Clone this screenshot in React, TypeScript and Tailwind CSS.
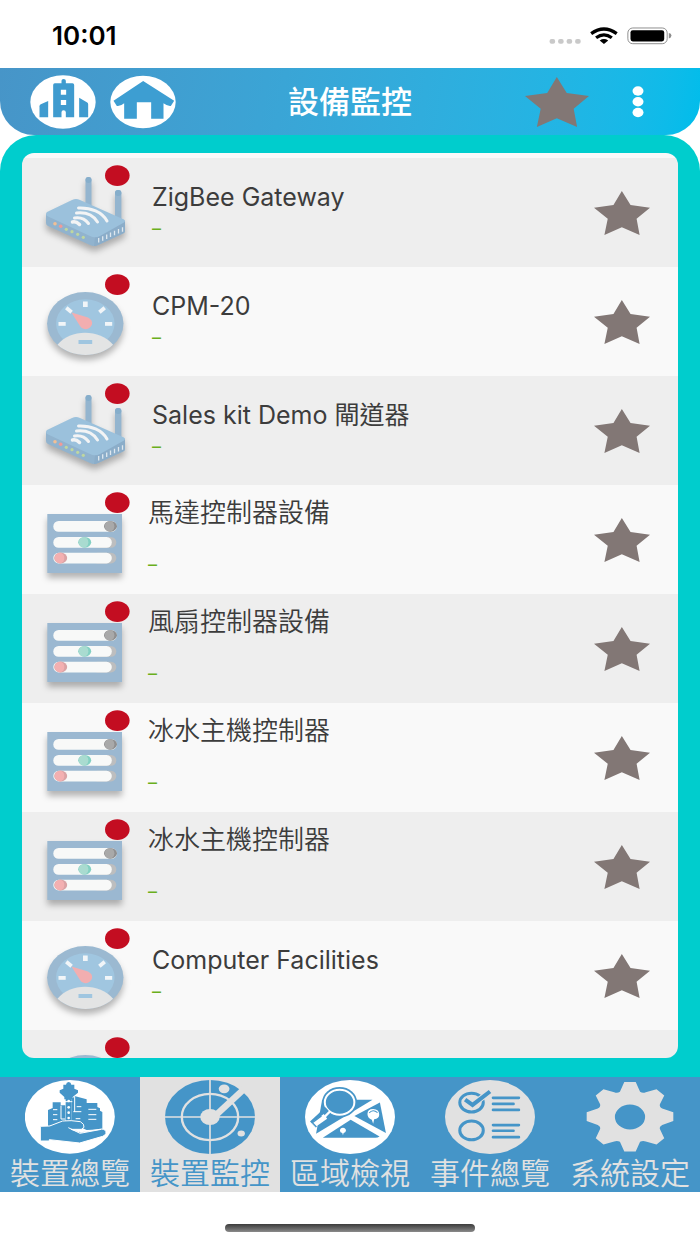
import { useState } from 'react';
import clsx from 'clsx';

type DeviceKind = 'router' | 'gauge' | 'controller';

type Device = {
  id: number;
  name?: string;
  kind: DeviceKind;
};

const devices: Device[] = [
  { id: 1, name: 'ZigBee Gateway', kind: 'router' },
  { id: 2, name: 'CPM-20', kind: 'gauge' },
  { id: 3, name: 'Sales kit Demo 閘道器', kind: 'router' },
  { id: 4, name: '馬達控制器設備', kind: 'controller' },
  { id: 5, name: '風扇控制器設備', kind: 'controller' },
  { id: 6, name: '冰水主機控制器', kind: 'controller' },
  { id: 7, name: '冰水主機控制器', kind: 'controller' },
  { id: 8, name: 'Computer Facilities', kind: 'gauge' },
  { id: 9, kind: 'gauge' },
];

const Star = ({ className }: { className?: string }) => (
  <svg viewBox="0 0 167 131" className={className} fill="#827775" aria-hidden="true">
    <polygon points="83,0 109,42 167,50 127,83 136,131 83,108 31,131 41,83 0,50 58,42" />
  </svg>
);

const RouterArt = () => (
  <g>
    <rect x="63.5" y="19" width="6" height="36" rx="3" fill="#94b5cf" />
    <rect x="63.5" y="19" width="6" height="6" rx="3" fill="#86aecb" />
    <rect x="93" y="32" width="6.4" height="34" rx="3" fill="#94b5cf" />
    <rect x="93" y="32" width="6.4" height="6" rx="3" fill="#86aecb" />
    <path d="M24 56 L24 65 Q24 67 26 68 L68 87 Q72 89 76 87 L101 75.5 Q103 74.5 103 73 L103 63 Z" fill="#91b3ce" />
    <path d="M73 79 L103 63.5 L103 73 Q103 74.5 101 75.5 L76 87 Q74 88 72 88 Z" fill="#8badc9" />
    <path d="M25 54 L50 42 Q54 40 58 42 L102 61.5 Q104 63 102 64.5 L78 78 Q73 80.5 68 78 L25 58 Q23 56 25 54 Z" fill="#9bc1dc" />
    <g fill="none" stroke="#f3f4f5" strokeWidth="3" strokeLinecap="round">
      <path d="M56.5 50 C69 49.5 80 54 85 63" />
      <path d="M54.5 55 C64 54 71.5 57.5 75.5 64" />
      <path d="M52.5 60 C58.5 59 63.5 61.5 66.5 65.5" />
      <path d="M50.5 64 C53.5 63.2 55.5 64.5 57.5 66.5" strokeWidth="3.5" />
    </g>
    <circle cx="33" cy="65.7" r="1.8" fill="#f2bf95" />
    <circle cx="38.7" cy="68.3" r="1.8" fill="#f09a98" />
    <circle cx="44.3" cy="71.3" r="1.6" fill="#bfd7a0" />
    <circle cx="50" cy="73.7" r="1.6" fill="#bfd7a0" />
    <circle cx="55.7" cy="76.3" r="1.6" fill="#bfd7a0" />
    <circle cx="61.3" cy="79.3" r="1.6" fill="#bfd7a0" />
    <path
      d="M76.7 80v4.5M80.7 78.2v4.5M84.7 76.4v4.5M88.5 74.6v4.5M92.5 72.8v4.5M96.5 71v4.5M100.5 69.2v4.5"
      stroke="#dfe8ef"
      strokeWidth="1.3"
    />
  </g>
);

const GaugeArt = () => (
  <g>
    <ellipse cx="63.3" cy="56.5" rx="38.2" ry="31.5" fill="#9bb9d1" />
    <ellipse cx="63.3" cy="56.5" rx="29.3" ry="24.2" fill="#a0c6e0" />
    <path d="M35.5 77.8 C48 61.8 78 61.8 91.1 77.8 C76 91.4 51 91.4 35.5 77.8 Z" fill="#e3e4e4" />
    <g fill="#f1f5f8">
      <rect x="61" y="34.5" width="4.7" height="5.5" />
      <rect x="36.5" y="55" width="7.2" height="3.8" />
      <rect x="83" y="55" width="7.2" height="3.8" />
      <rect x="43.5" y="41.2" width="7" height="3.8" transform="rotate(40 47 43)" />
      <rect x="76.5" y="41.2" width="7" height="3.8" transform="rotate(-40 80 43)" />
    </g>
    <path d="M49.5 45.5 L66 50.5 Q71 53 70 57.5 Q68 62 63 62.3 Q59.5 62 58 59 Z" fill="#f2aeb0" />
    <rect x="56.5" y="73" width="13.7" height="4" fill="#a0c6e0" />
  </g>
);

const ControllerArt = () => (
  <g>
    <rect x="25.3" y="29" width="74.7" height="59" fill="#9bb8d1" />
    <rect x="31.3" y="36" width="63.5" height="10.7" rx="5.3" fill="#f8f9f8" />
    <rect x="70" y="52" width="24.3" height="10.7" rx="5.3" fill="#bdbebf" />
    <rect x="31.3" y="52" width="58.5" height="10.7" rx="5.3" fill="#f8f9f8" />
    <rect x="70" y="67.7" width="24.3" height="10.7" rx="5.3" fill="#bdbebf" />
    <rect x="31.3" y="67.7" width="58.5" height="10.7" rx="5.3" fill="#f8f9f8" />
    <ellipse cx="88.5" cy="41.3" rx="6.5" ry="5.4" fill="#8f8f90" />
    <path d="M88 36 A5 5.4 0 0 1 88 46.7 A6 5.4 0 0 1 88 36Z" fill="#a9a9a9" />
    <ellipse cx="62.7" cy="57.3" rx="6.5" ry="5.4" fill="#83d0c2" />
    <path d="M62 52 A5 5.4 0 0 1 62 62.7 A6 5.4 0 0 1 62 52Z" fill="#a9dbd0" />
    <ellipse cx="38.7" cy="73" rx="6.5" ry="5.4" fill="#daa3a5" />
    <path d="M38 67.7 A5 5.4 0 0 1 38 78.4 A6 5.4 0 0 1 38 67.7Z" fill="#f3b0b1" />
  </g>
);

const DeviceIcon = ({ kind }: { kind: DeviceKind }) => (
  <svg viewBox="0 0 110 109" className="w-[110px] h-[109px] shrink-0" aria-hidden="true">
    <g className="drop-shadow-[0_5px_3px_rgba(0,0,0,0.28)]">
      {kind === 'router' && <RouterArt />}
      {kind === 'gauge' && <GaugeArt />}
      {kind === 'controller' && <ControllerArt />}
    </g>
    <ellipse cx="95.3" cy="17.6" rx="12.3" ry="10.3" fill="#c30d21" />
  </svg>
);

const DeviceInfo = ({ name }: { name: string }) => {
  // names without latin letters get the spread two line layout
  const isCjk = !/[A-Za-z]/.test(name);

  return (
    <div
      className={clsx(
        'flex flex-1 flex-col self-stretch min-w-0',
        isCjk ? 'pl-4 pt-3 gap-5' : 'pl-5 pt-[23px]'
      )}
    >
      <p className={clsx('leading-8 whitespace-nowrap text-[#3c3c3c]', isCjk ? 'text-[26px] font-[350]' : 'text-[25px]')}>
        {name}
      </p>
      <p className="text-lg leading-8 text-[#6aaf1c]">–</p>
    </div>
  );
};

const DeviceRow = ({ device }: { device: Device }) => (
  <li className="flex items-center h-[109px] shrink-0 odd:bg-[#eeeeee] even:bg-[#f9f9f9]">
    <DeviceIcon kind={device.kind} />
    {device.name ? <DeviceInfo name={device.name} /> : <div className="flex-1" />}
    <button type="button" aria-label="Favorite" className="mr-7">
      <Star className="w-14 h-11" />
    </button>
  </li>
);

const StatusBar = () => (
  <div className="flex h-[68px] shrink-0 items-center justify-between pl-[52px] pr-[27px] pt-1">
    <span className="text-[26px] leading-8 font-semibold text-black">10:01</span>
    <svg viewBox="594 80 376 58" className="w-[125px] h-[19px]" aria-hidden="true">
      <g fill="#c9c9c9">
        <rect x="596" y="117" width="17" height="14" rx="6" />
        <rect x="622" y="117" width="17" height="14" rx="6" />
        <rect x="648" y="117" width="17" height="14" rx="6" />
        <rect x="674" y="117" width="17" height="14" rx="6" />
      </g>
      <g fill="none" stroke="#000" strokeWidth="10">
        <path d="M723 100 Q762 72 801 100" />
        <path d="M738 113 Q762 95 786 113" />
      </g>
      <path d="M749 121 Q762 112 775 121 L762 132 Z" />
      <rect x="835" y="83" width="120" height="48" rx="15" fill="none" stroke="#8d8d8d" strokeWidth="3" />
      <rect x="843" y="90" width="103" height="34" rx="7" />
      <path d="M960 98 Q968 99 968 106 Q968 113 960 115 Z" fill="#8d8d8d" />
    </svg>
  </div>
);

const Header = () => (
  <header className="grid h-[67px] shrink-0 grid-cols-[1fr_auto_1fr] items-center rounded-b-[34px] bg-linear-100 from-[#4795c8] to-[#00bdeb]">
    <div className="flex items-center gap-[14px] pl-[30px]">
      <button type="button" aria-label="Buildings">
        <svg viewBox="90 224 197 162" className="w-[66px] h-[54px]" fill="#3f9bcf">
          <ellipse cx="188.5" cy="305" rx="98" ry="80" fill="#fff" />
          <path d="M118 351 V318 Q118 314 122 312 L144 302 V351 Z" />
          <path d="M264 351 V312 Q264 308 260 306 L237 292 V351 Z" />
          <path
            fillRule="evenodd"
            d="M159 351 V254 Q159 249 164 249 H184 V241 Q184 236 190 236 Q197 236 197 241 V249 H217 Q222 249 222 254 V351 H197 V336 Q197 330 190 330 Q184 330 184 336 V351 Z M182 268 V283 H198 V268 Z M182 299 V314 H198 V299 Z"
          />
        </svg>
      </button>
      <button type="button" aria-label="Home">
        <svg viewBox="330 225 197 162" className="w-[66px] h-[54px]" fill="#3d9ed2">
          <ellipse cx="428.5" cy="306" rx="98" ry="79" fill="#fff" />
          <path d="M429 243 L522 302 L512 318 Q504 320 490 310 V356 H453 V307 H410 V356 H372 V310 Q360 320 350 318 L340 302 Z" />
        </svg>
      </button>
    </div>
    <h1 className="text-[31px] font-medium leading-8 text-white">設備監控</h1>
    <div className="flex items-center justify-end gap-[43px] pr-14">
      <button type="button" aria-label="Favorites">
        <Star className="w-16 h-[52px]" />
      </button>
      <button type="button" aria-label="More">
        <svg viewBox="0 0 12 32" className="w-3 h-8" fill="#fff">
          <ellipse cx="6" cy="5" rx="5.5" ry="4.7" />
          <ellipse cx="6" cy="15.7" rx="5.5" ry="4.7" />
          <ellipse cx="6" cy="26.5" rx="5.5" ry="4.7" />
        </svg>
      </button>
    </div>
  </header>
);

const tabIcon = 'w-[90px] h-[74px]';

const OverviewIcon = () => (
  <svg viewBox="77 180 270 222" className={tabIcon} fill="#4595c8" aria-hidden="true">
    <ellipse cx="211.5" cy="290.5" rx="135" ry="110.5" fill="#fff" />
    <path d="M208 186 Q215 187 216 194 H225 V206 L236 211 V218 L220 231 V238 H216 V310 H199 V238 H195 V231 L181 218 V211 L192 206 V194 H200 Q201 187 208 186 Z" />
    <path d="M146 318 V270 L160 264 V247 H184 V256 H198 V310 Z" />
    <path d="M216 310 V236 L228 229 L262 238 V249 H294 V261 L302 265 V272 L309 276 V328 L262 330 Z" />
    <g fill="none" stroke="#fff" strokeWidth="3">
      <path d="M161 269h13M161 284h13M161 299h13M232 260h14M222 275h24M229 296h14M267 268h24M267 284h24M267 298h24" />
      <path d="M185 257v40h12M226 230v46M197 245h22" />
    </g>
    <g fill="#fff">
      <circle cx="208" cy="243" r="4" />
      <circle cx="208" cy="262" r="4" />
      <circle cx="208" cy="278" r="4" />
      <circle cx="208" cy="294" r="4" />
    </g>
    <path
      d="M123 319 L151 318 L190 303 Q215 300 243 305 Q256 312 254 322 L246 328 H215 L245 337 L307 327 Q321 328 320 340 Q318 346 310 349 L241 369 L150 359 V363 H123 Z"
      stroke="#fff"
      strokeWidth="3"
    />
    <path d="M207 323 L242 340 L306 328" fill="none" stroke="#fff" strokeWidth="3" />
  </svg>
);

const RadarIcon = () => (
  <svg viewBox="75 61 268 220" className={tabIcon} aria-hidden="true">
    <ellipse cx="209" cy="171" rx="134" ry="110" fill="#4595c8" />
    <g fill="none" stroke="#e1e1e1">
      <ellipse cx="209" cy="171" rx="84" ry="69" strokeWidth="7" />
      <path d="M209 58 V284 M72 171 H346" strokeWidth="5" />
      <path d="M209 182 L310 88" strokeWidth="19" />
    </g>
    <g fill="#e1e1e1">
      <ellipse cx="209" cy="171" rx="29" ry="24" />
      <ellipse cx="251" cy="87" rx="16" ry="13" />
      <ellipse cx="302" cy="220" rx="11" ry="9" />
    </g>
  </svg>
);

const MapIcon = () => (
  <svg viewBox="495 59 268 220" className={tabIcon} fill="#4595c8" aria-hidden="true">
    <ellipse cx="629" cy="169" rx="134" ry="110" fill="#fff" />
    <path d="M546 118 H696 L528 219 Z" />
    <path d="M718 126 L736 217 L642 166 Z" />
    <path d="M631 177 L717 227 Q712 231 704 231 H548 Z" />
    <ellipse cx="598" cy="125" rx="52" ry="45" />
    <ellipse cx="598" cy="125" rx="44" ry="37" fill="none" stroke="#fff" strokeWidth="6" />
    <path d="M564 149 L518 191" stroke="#4595c8" strokeWidth="24" />
    <path d="M570 152 L551 171" stroke="#fff" strokeWidth="7" />
    <path d="M556 167 L520 193" stroke="#fff" strokeWidth="17" />
    <path d="M544 166 L517 186 L529 199" fill="none" stroke="#4595c8" strokeWidth="4" />
    <path d="M681 160 Q681 145 698 145 Q716 146 716 162 Q716 173 701 176 L698 189 L694 177 Q681 172 681 160 Z" fill="#fff" />
    <path d="M686 157 Q697 144 711 156" fill="none" stroke="#4595c8" strokeWidth="3" />
    <path d="M599 209 Q600 201 608 201 Q617 202 617 210 Q616 216 610 217 L608 223 L606 217 Q599 215 599 209 Z" fill="#fff" />
  </svg>
);

const EventsIcon = () => (
  <svg viewBox="78 120 268 220" className={tabIcon} aria-hidden="true">
    <ellipse cx="212" cy="230" rx="134" ry="110" fill="#e1e1e1" />
    <g fill="none" stroke="#4595c8" strokeWidth="9">
      <ellipse cx="157" cy="187" rx="35" ry="28" />
      <ellipse cx="157" cy="270" rx="35" ry="28" />
      <path d="M138 178 L160 194 L212 154" stroke="#e1e1e1" strokeWidth="18" />
      <path d="M138 178 L160 194 L212 154" strokeWidth="12" />
      <g strokeLinecap="round" strokeWidth="8">
        <path d="M221 173h77M221 191h61M221 209h77M221 254h77M221 271h61M221 290h77" />
      </g>
    </g>
  </svg>
);

const SettingsIcon = () => (
  <svg viewBox="496 120 268 220" className={tabIcon} aria-hidden="true">
    <path
      fillRule="evenodd"
      fill="#e1e1e1"
      d="M613 126 H647 L660 155 Q668 160 677 156 L709 147 L732 166 L719 192 Q717 200 726 205 L759 216 V242 L726 254 Q717 259 719 266 L732 293 L709 312 L677 303 Q668 300 660 304 L647 333 H613 L600 304 Q592 300 583 303 L551 312 L528 293 L541 266 Q543 259 534 254 L501 242 V216 L534 205 Q543 200 541 192 L528 166 L551 147 L583 156 Q592 160 600 155 Z M630 193 A45 37 0 1 0 630 267 A45 37 0 1 0 630 193 Z"
    />
  </svg>
);

const tabs = [
  { id: 'overview', label: '裝置總覽', Icon: OverviewIcon },
  { id: 'monitor', label: '裝置監控', Icon: RadarIcon },
  { id: 'area', label: '區域檢視', Icon: MapIcon },
  { id: 'events', label: '事件總覽', Icon: EventsIcon },
  { id: 'settings', label: '系統設定', Icon: SettingsIcon },
];

const TabBar = () => {
  const [active, setActive] = useState('monitor');

  return (
    <nav className="grid shrink-0 grid-cols-5">
      {tabs.map(({ id, label, Icon }) => (
        <button
          key={id}
          type="button"
          onClick={() => setActive(id)}
          className={clsx(
            'flex flex-col items-center pt-[3px]',
            active === id ? 'bg-[#e1e1e1] text-[#4595c8]' : 'bg-[#4595c8] text-[#e1e1e1]'
          )}
        >
          <Icon />
          <span className="text-[30px] font-[350] leading-[38px] whitespace-nowrap">{label}</span>
        </button>
      ))}
    </nav>
  );
};

export default function App() {
  return (
    <div className="flex h-screen flex-col bg-white font-[Inter,'Noto_Sans_CJK_TC',sans-serif]">
      <StatusBar />
      <Header />
      <main className="flex min-h-0 flex-1 flex-col rounded-t-[36px] bg-[#00cdcd] px-[22px] pt-[18px] pb-[19px]">
        <ul className="flex min-h-0 flex-1 flex-col overflow-y-auto rounded-xl bg-[#f9f9f9] pt-[5px] [scrollbar-width:none]">
          {devices.map((device) => (
            <DeviceRow key={device.id} device={device} />
          ))}
        </ul>
      </main>
      <TabBar />
      <footer className="flex h-[52px] shrink-0 items-end justify-center pb-3">
        <div className="h-2 w-[250px] rounded-full bg-linear-to-b from-[#3c3c3c] to-[#8a8a8a]" />
      </footer>
    </div>
  );
}
